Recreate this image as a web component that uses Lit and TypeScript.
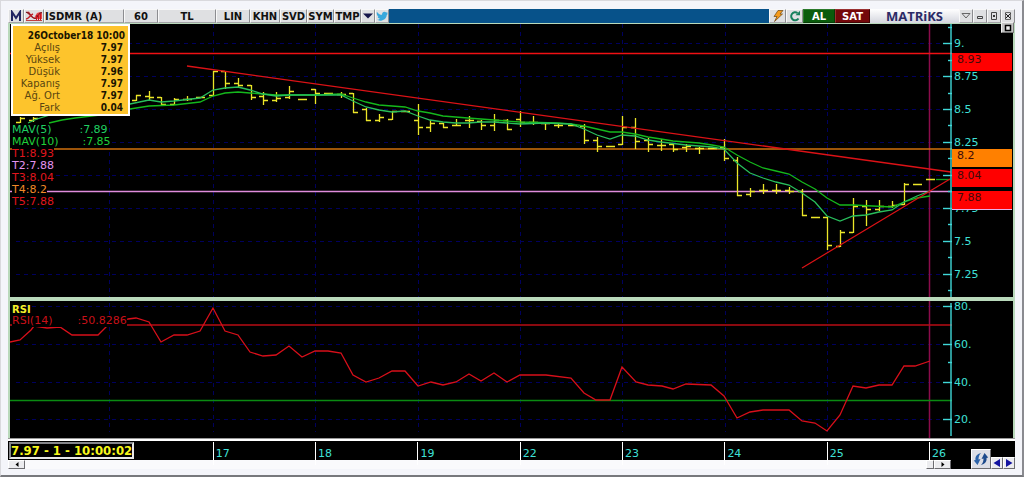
import { LitElement, html, svg, css } from "lit";
import { customElement, state } from "lit/decorators.js";

type Bar = [number, number, number, number, number];

// Chart space: x runs 10..952, price pane y 24..297, RSI pane y 301..438.
const DAY_LINES = [109.5, 213.5, 315.5, 418.5, 520.5, 622.5, 725.5, 827.5];

// [x, high, low, open, close]
const BARS: Bar[] = [
  [20, 117, 122, 122, 118], [33, 117, 121, 120, 118],
  [136, 95, 100, 100, 95], [149, 91, 99, 96, 97], [161, 97, 105, 97, 104], [174, 98, 104, 104, 99],
  [187, 96, 100, 99, 99], [200, 97, 97, 97, 97], [213, 71, 95, 95, 71], [225, 71, 88, 71, 83],
  [238, 78, 86, 83, 85], [251, 85, 99, 85, 97], [263, 92, 104, 96, 100], [276, 92, 101, 100, 98],
  [289, 86, 98, 97, 91], [302, 99, 99, 99, 99], [315, 89, 103, 89, 93], [328, 93, 94, 93, 93],
  [341, 92, 97, 94, 94], [353, 93, 112, 93, 112], [366, 108, 120, 109, 120], [379, 114, 121, 120, 117],
  [392, 111, 119, 119, 111], [405, 111, 111, 111, 111], [418, 104, 134, 120, 127], [430, 120, 131, 127, 123],
  [443, 123, 127, 123, 127], [456, 119, 125, 125, 125], [469, 116, 127, 120, 120], [481, 120, 129, 121, 125],
  [494, 114, 130, 125, 120], [507, 119, 129, 120, 129], [520, 111, 126, 119, 122], [533, 116, 124, 122, 122],
  [545, 122, 129, 123, 123], [558, 124, 127, 125, 125], [572, 125, 125, 125, 125], [584, 124, 143, 126, 140],
  [597, 137, 151, 140, 146], [610, 146, 146, 146, 146], [622, 116, 144, 144, 127], [635, 118, 148, 127, 141],
  [648, 138, 151, 140, 144], [661, 139, 150, 145, 145], [673, 144, 151, 144, 149], [686, 144, 151, 147, 146],
  [699, 147, 153, 148, 148], [712, 148, 148, 148, 148], [724, 139, 160, 147, 158], [737, 157, 195, 160, 195],
  [750, 188, 196, 194, 191], [763, 184, 193, 190, 190], [776, 184, 193, 190, 190], [789, 187, 193, 190, 191],
  [802, 189, 215, 191, 215], [815, 217, 217, 217, 217], [827, 217, 249, 217, 245], [840, 230, 246, 246, 232],
  [853, 198, 232, 232, 206], [866, 200, 225, 206, 209], [879, 200, 210, 209, 206], [892, 201, 207, 206, 205],
  [904, 183, 204, 204, 184], [917, 184, 184, 184, 184], [930, 179, 179, 179, 179],
];

const MAV5 =
  "28,123 37,119 50,115 80,111 130,104 149,100 161,102 174,101 200,98 213,90 225,88 238,87 250,90 263,94 276,96 289,95 341,95 353,101 366,107 379,110 392,112 405,111 418,116 430,120 443,122 456,123 468,123 481,122 494,122 520,124 545,123 571,124 584,129 597,135 610,139 622,135 635,136 648,140 661,142 686,145 712,147 724,149 737,163 750,173 763,178 776,182 789,185 802,193 815,202 827,216 840,221 853,216 866,215 879,212 892,210 904,202 917,196 930,191";
const MAV10 =
  "49,123 62,120 75,118 100,115 130,109 149,106 174,105 200,102 213,96 225,93 238,92 250,93 263,94 276,95 315,95 341,94 353,98 366,102 379,105 405,107 418,111 430,113 443,116 468,118 494,120 520,122 558,123 571,124 584,126 597,129 610,132 622,132 635,134 648,137 661,139 673,141 699,143 712,145 724,147 737,155 750,162 763,168 776,171 789,174 802,182 815,189 827,198 840,205 853,205 892,207 904,202 917,198 930,196";
const RSI =
  "10,342 20,340 31,330 34,326 47,328 60,327 72,335 98,335 108,325 118,320 128,319 136,318 149,322 161,342 174,335 187,335 200,331 213,308 225,331 238,335 250,352 263,356 276,355 289,346 302,357 315,351 328,351 341,353 353,375 366,382 379,378 392,371 405,371 418,386 431,382 443,385 456,382 469,374 481,381 494,373 507,382 520,375 546,375 571,378 584,393 596,400 610,400 622,367 636,382 648,385 662,386 673,389 686,384 711,385 724,396 737,418 750,412 763,410 789,410 802,421 815,423 827,431 840,415 853,386 866,388 879,385 892,385 904,366 915,366 930,361";

const PRICE_TICKS: [string, number][] = [
  ["9.", 43], ["8.75", 76], ["8.5", 109], ["8.25", 142], ["", 175], ["7.75", 208], ["7.5", 241], ["7.25", 274],
];
const RSI_TICKS: [string, number][] = [["80.", 306], ["60.", 344], ["40.", 382], ["20.", 419]];
const TAGS = [
  { text: "8.93", y: 53, fill: "#ff0000" },
  { text: "8.2", y: 149, fill: "#ff8000" },
  { text: "8.04", y: 169, fill: "#ff0000" },
  { text: "7.88", y: 191, fill: "#ff0000" },
];
const DAYS = ["17", "18", "19", "22", "23", "24", "25"];
const LEVELS = [
  { text: "T1:8.93", cls: "red" },
  { text: "T2:7.88", cls: "orchid" },
  { text: "T3:8.04", cls: "red" },
  { text: "T4:8.2", cls: "orange" },
  { text: "T5:7.88", cls: "red" },
];
const QUOTE: [string, string][] = [
  ["Açılış", "7.97"], ["Yüksek", "7.97"], ["Düşük", "7.96"],
  ["Kapanış", "7.97"], ["Ağ. Ort", "7.97"], ["Fark", "0.04"],
];

const barPath = BARS.map(([x, hi, lo, o, c]) =>
  `M${x + 0.5} ${hi}V${lo + 1}M${x - 4} ${o + 0.5}H${x}M${x} ${c + 0.5}H${x + 5}`).join("");

@customElement("app-root")
export class AppRoot extends LitElement {
  @state() private scale = "LIN";

  static styles = css`
    :host { display: block; font-family: "DejaVu Sans", Verdana, sans-serif; font-size: 11px; }
    * { box-sizing: border-box; }
    button { font: inherit; color: inherit; margin: 0; padding: 0; border: 0; border-radius: 0; }
    svg { display: block; }
    .window {
      background: #f4f5fa;
      padding: 8px 7px 6px 7px;
      border: solid #d9d9dd; border-width: 1px 2px 2px 1px;
      border-right-color: #8a8b90; border-bottom-color: #77787c;
    }
    .toolbar { display: flex; height: 14px; background: #07528a; font: bold 10px "DejaVu Sans", Verdana, sans-serif; color: #111; }
    .toolbar button {
      display: flex; align-items: center; justify-content: center; overflow: hidden; white-space: nowrap;
      background: #dfe0e2; border: 1px solid; border-color: #f8f8f8 #8c8d90 #a4a5a8 #f8f8f8;
    }
    .toolbar .w14 { width: 14px; }
    .toolbar .w16 { width: 16px; }
    .toolbar .w17 { width: 17px; }
    .toolbar .w20 { width: 20px; }
    .toolbar .w27 { width: 27px; }
    .toolbar .w30 { width: 30px; }
    .toolbar .w34 { width: 34px; }
    .toolbar .w58 { width: 58px; }
    .toolbar .symbol { width: 80px; justify-content: flex-start; }
    .toolbar .buy { width: 32px; background: #0a5c0c; color: #fff; border-color: #2b7a2b #063c06 #063c06 #2b7a2b; }
    .toolbar .sell { width: 35px; background: #74080a; color: #fff; border-color: #9a3030 #400404 #400404 #9a3030; }
    .spacer { flex: 1; }
    .brand {
      width: 89px; display: flex; align-items: center; justify-content: center;
      background: linear-gradient(#fff, #d4d6de); color: #2b2b66;
      font: bold 13px/14px "Open Sans", sans-serif;
    }
    .panes { background: #b9d9bb; padding: 1px 2px 0 2px; position: relative; }
    .pane { display: grid; grid-template-columns: minmax(0, 1fr) 61px; background: #000; position: relative; margin-bottom: 4px; }
    .pane.last { margin-bottom: 0; }
    .plot { width: 100%; height: 100%; }
    .plot * { vector-effect: non-scaling-stroke; }
    .price { height: 273px; }
    .rsi { height: 137px; }
    .none { fill: none; }
    .grid { stroke: #00005e; stroke-dasharray: 4 4; }
    .aqua { stroke: #3fd8d8; stroke-width: 1.4; }
    .label { fill: #3fe0d8; font-size: 11px; }
    .tag { fill: #3d0b0b; font-size: 11px; }
    .maximise {
      position: absolute; right: 1px; top: -1px; width: 13px; height: 11px; z-index: 1;
      background: #c4c4c4; border: 1px solid; border-color: #eee #777 #777 #eee;
      display: flex; align-items: center; justify-content: center;
    }
    .quote {
      position: absolute; left: 1px; top: 0; width: 119px; height: 92px; background: #fdc42c;
      border: 2px solid #fff; padding: 4px 3px 0 0; font-size: 10px; line-height: 12px;
    }
    .quote h2 { margin: 0; text-align: right; font: bold 10px/12px "DejaVu Sans Condensed", "DejaVu Sans", sans-serif; color: #1a1400; }
    .quote dl { margin: 0; display: grid; grid-template-columns: 47px 1fr; padding-right: 2px; }
    .quote dt { text-align: right; color: #5a4610; }
    .quote dd { margin: 0; text-align: right; font-family: "DejaVu Sans Condensed", "DejaVu Sans", sans-serif; font-weight: bold; color: #1a1400; }
    .legend { position: absolute; left: 2px; top: 100px; display: grid; justify-items: start; line-height: 12px; }
    .legend > div { background: #000; display: flex; }
    .legend .mav5 { color: #1fcf62; gap: 28px; }
    .legend .mav10 { color: #1fcf3a; gap: 24px; }
    .red { color: #e0161e; }
    .orchid { color: #e293ef; }
    .orange { color: #f08a28; }
    .rsi-legend { position: absolute; left: 2px; top: 3px; line-height: 12px; color: #c81018; }
    .rsi-legend h2 { margin: 0; font: bold 10px/11px "DejaVu Sans", sans-serif; color: #f6f02a; }
    .rsi-legend div { display: flex; gap: 25px; background: #000; }
    .rule { height: 3px; background: #fff; border-top: 1px solid #999; }
    .footer { display: grid; grid-template-columns: minmax(0, 1fr) 64px; }
    .timeline { display: grid; grid-template-columns: 205fr 717fr 22fr; height: 19px; background: #000; padding-top: 1px; color: #3fe0d8; font-size: 11px; line-height: 23px; }
    .days { display: grid; grid-template-columns: repeat(7, 1fr); }
    .day { border-left: 1px solid #fff; padding-left: 2px; overflow: visible; white-space: nowrap; }
    .status {
      justify-self: start; align-self: start; margin-left: 1px; height: 17px; white-space: nowrap; color: #f8f81c;
      border: 2px solid; border-color: #85868a #e8e8e8 #e8e8e8 #85868a;
      font: bold 13px/13px "DejaVu Sans Condensed", "DejaVu Sans", sans-serif;
    }
    .scroll { display: flex; height: 9px; background: #fafafc; }
    .scroll button, .corner button {
      display: flex; align-items: center; justify-content: center;
      background: #ececef; border: 1px solid; border-color: #fff #6c6c70 #6c6c70 #fff;
    }
    .scroll .end { width: 17px; }
    .scroll .thumb { width: 8px; }
    .corner { display: flex; align-items: flex-end; justify-content: flex-end; background: #000; }
    .corner .sync { width: 20px; height: 20px; background: #dcdee6; }
    .corner .step { width: 12px; height: 12px; }
  `;

  private pick(mode: string) {
    this.scale = mode;
  }

  private priceTag(t: { text: string; y: number; fill: string }) {
    return svg`<rect x="0" y=${t.y} width="60" height="18" fill=${t.fill}></rect>
      <text class="tag" x="5" y=${t.y + 10}>${t.text}</text>`;
  }

  private ticks(list: [string, number][]) {
    return list.map(([, y]) => svg`<path class="aqua" d=${`M943 ${y + 0.5}H952`}></path>`);
  }

  private labels(list: [string, number][]) {
    return list.map(([text, y]) => svg`<text class="label" x="2" y=${y + 4}>${text}</text>`);
  }

  private toolbar() {
    return html`
      <div class="toolbar">
        <button class="w16" aria-label="Menu">
          <svg width="14" height="12" viewBox="0 0 14 12"><path d="M3 11V2L7 8L11 2V11" fill="none" stroke="#202460" stroke-width="2"/></svg>
        </button>
        <button class="w20" aria-label="Chart">
          <svg width="18" height="12" viewBox="0 0 18 12">
            <path d="M1 2L4 1.500L7 6L9 8L12 3L15 2L17 3V9H9L6 7Z" fill="#e8484c"/>
            <path d="M1 2.500C5 1 6 8.500 10 8.500C13 8.500 12 3 17 2.500" fill="none" stroke="#7a1820" stroke-width="1.200"/>
            <path d="M1 9C4 9 5 5 8 4" fill="none" stroke="#c02028" stroke-width="1.400"/>
            <path d="M11.500 5V10M13.500 4V10M15.500 4V10" stroke="#c8141c"/>
            <path d="M1 10.500H17" stroke="#c04040"/>
          </svg>
        </button>
        <button class="symbol">ISDMR (A)</button>
        <button class="w34">60</button>
        <button class="w58">TL</button>
        <button class="w34" aria-pressed=${this.scale === "LIN"} @click=${() => this.pick("LIN")}>LIN</button>
        <button class="w30">KHN</button>
        <button class="w27">SVD</button>
        <button class="w27">SYM</button>
        <button class="w27">TMP</button>
        <button class="w14" aria-label="More">
          <svg width="10" height="6" viewBox="0 0 10 6"><path d="M0 0.500H10L5 5.500Z" fill="#15154a"/></svg>
        </button>
        <button class="w14" aria-label="Share">
          <svg width="14" height="12" viewBox="0 0 14 12"><path d="M1 1C3 4 5 4.500 7 4.500C7 1 10 0 12 2L13.500 1.500L12.800 3L14 3.200L12.500 5C12 10 6 13 1 10.500C3 10.500 4 10 4.500 9C2.500 8.500 2 7.500 2 6.800H3C1 5.500 0.500 3 1 1Z" fill="#38a8dc"/></svg>
        </button>
        <span class="spacer"></span>
        <button class="w17" aria-label="Quick trade">
          <svg width="12" height="12" viewBox="0 0 12 12"><path d="M6 0.500H11L8 4H10.500L2.500 11.500L5 6.500H2Z" fill="#f59b1c" stroke="#6b4510" stroke-width="0.700"/></svg>
        </button>
        <button class="w17" aria-label="Refresh">
          <svg width="12" height="12" viewBox="0 0 12 12"><path d="M9.500 8.500A4 4 0 1 1 8.500 3" fill="none" stroke="#16805c" stroke-width="2"/><path d="M6.500 5.200H11V0.800Z" fill="#16805c"/></svg>
        </button>
        <button class="buy">AL</button>
        <button class="sell">SAT</button>
        <span class="brand">MATRiKS</span>
        <button class="w14" aria-label="Roll up">
          <svg width="10" height="8" viewBox="0 0 10 8"><path d="M1 1.500H9L5 6Z" fill="none" stroke="#666"/></svg>
        </button>
        <button class="w14" aria-label="Minimise">
          <svg width="10" height="10" viewBox="0 0 10 10"><path d="M2.500 5.500H7.500V7.500H2.500Z" fill="none" stroke="#444"/></svg>
        </button>
        <button class="w14" aria-label="Restore">
          <svg width="10" height="10" viewBox="0 0 10 10"><path d="M2.500 1.500H7.500V8.500H2.500Z" fill="none" stroke="#444"/><path d="M4 4H6V6H4Z" fill="#333"/></svg>
        </button>
        <button class="w14" aria-label="Close">
          <svg width="10" height="10" viewBox="0 0 10 10"><path d="M2.500 1.500H7.500V8.500H2.500Z" fill="none" stroke="#666"/><path d="M2.500 2.500L7.500 7.500M7.500 2.500L2.500 7.500" stroke="#222"/></svg>
        </button>
      </div>`;
  }

  private pricePane() {
    return html`
      <section class="pane price" aria-label="Price">
        <svg class="plot" viewBox="10 24 942 273" preserveAspectRatio="none">
          ${PRICE_TICKS.map(([, y]) => svg`<path class="grid" d=${`M16 ${y + 0.5}H952`}></path>`)}
          ${DAY_LINES.map((x) => svg`<path class="grid" d=${`M${x} 24V297`}></path>`)}
          <path d="M929.500 24V297" stroke="#8c0c4c" stroke-width="1.500"/>
          <path d="M10 53.500H952" stroke="#f01014" stroke-width="1.500"/>
          <path d="M10 149H952" stroke="#d0700c" stroke-width="1.500"/>
          <path d="M10 191.500H952" stroke="#e08cdc" stroke-width="1.500"/>
          <path class="none" d=${barPath} stroke="#ece628" stroke-width="1.300"/>
          <polyline class="none" points=${MAV10} stroke="#14b81c" stroke-width="1.300"/>
          <polyline class="none" points=${MAV5} stroke="#28bf5c" stroke-width="1.300"/>
          <path d="M936 179.500H950" stroke="#14a020" stroke-width="1.300"/>
          <path d="M187 66L951 172" stroke="#dc1216" stroke-width="1.300"/>
          <path d="M802 268L950 179" stroke="#dc1216" stroke-width="1.200"/>
          ${this.ticks(PRICE_TICKS)}
          ${[27, 60, 93, 125, 158, 191, 224, 257, 290].map((y) => svg`<path class="aqua" d=${`M948 ${y + 0.5}H952`}></path>`)}
          <path class="aqua" d="M951 24V297"/>
        </svg>
        <svg width="61" height="273" viewBox="0 24 61 273">
          ${this.labels(PRICE_TICKS)}
          ${TAGS.map((t) => this.priceTag(t))}
          <path d="M0 209.500H60" stroke="#e8b0e8"/>
        </svg>
        <div class="legend">
          <div class="mav5"><span>MAV(5)</span><span>:7.89</span></div>
          <div class="mav10"><span>MAV(10)</span><span>:7.85</span></div>
          ${LEVELS.map((l) => html`<div class=${l.cls}>${l.text}</div>`)}
        </div>
        <aside class="quote">
          <h2>26October18 10:00</h2>
          <dl>${QUOTE.map(([k, v]) => html`<dt>${k}</dt><dd>${v}</dd>`)}</dl>
        </aside>
      </section>`;
  }

  private rsiPane() {
    return html`
      <section class="pane rsi last" aria-label="RSI">
        <svg class="plot" viewBox="10 301 942 137" preserveAspectRatio="none">
          ${RSI_TICKS.map(([, y]) => svg`<path class="grid" d=${`M16 ${y + 0.5}H952`}></path>`)}
          ${DAY_LINES.map((x) => svg`<path class="grid" d=${`M${x} 303V432`}></path>`)}
          <path d="M929.500 301V438" stroke="#8c0c4c" stroke-width="1.500"/>
          <path d="M10 325H952" stroke="#b80c14" stroke-width="1.400"/>
          <path d="M10 400.500H952" stroke="#0a8a12" stroke-width="1.300"/>
          <polyline class="none" points=${RSI} stroke="#d80f1a" stroke-width="1.300"/>
          ${this.ticks(RSI_TICKS)}
          <path class="aqua" d="M948 362.500H952"/>
          <path class="aqua" d="M951 303V436"/>
        </svg>
        <svg width="61" height="137" viewBox="0 301 61 137">${this.labels(RSI_TICKS)}</svg>
        <div class="rsi-legend">
          <h2>RSI</h2>
          <div><span>RSI(14)</span><span>:50.8286</span></div>
        </div>
      </section>`;
  }

  private footer() {
    return html`
      <div class="footer">
        <div>
          <div class="timeline">
            <output class="status">7.97 - 1 - 10:00:02</output>
            <div class="days">${DAYS.map((d) => html`<span class="day">${d}</span>`)}</div>
            <span class="day">26</span>
          </div>
          <div class="scroll">
            <button class="end" aria-label="Scroll left"><svg width="4" height="5" viewBox="0 0 4 5"><path d="M3.500 0V5L0.500 2.500Z"/></svg></button>
            <span class="spacer"></span>
            <button class="thumb" aria-label="Scroll position"></button>
            <button class="end" aria-label="Scroll right"><svg width="4" height="5" viewBox="0 0 4 5"><path d="M0.500 0V5L3.500 2.500Z"/></svg></button>
          </div>
        </div>
        <div class="corner">
          <button class="sync" aria-label="Synchronise">
            <svg width="16" height="16" viewBox="0 0 16 16">
              <path d="M8 2C4 3 2 5.500 2.500 9L0.800 9.500L4.500 14L7.500 8L5.500 8.500C5.500 6 6 4 8 2Z" fill="#2c62a8"/>
              <path d="M8 14C12 13 14 10.500 13.500 7L15.200 6.500L11.500 2L8.500 8L10.500 7.500C10.500 10 10 12 8 14Z" fill="#1c4a8c"/>
            </svg>
          </button>
          <button class="step" aria-label="Previous"><svg width="8" height="8" viewBox="0 0 8 8"><path d="M7 0V8L0.500 4Z" fill="#1414a0"/></svg></button>
          <button class="step" aria-label="Next"><svg width="8" height="8" viewBox="0 0 8 8"><path d="M1 0V8L7.500 4Z" fill="#1414a0"/></svg></button>
        </div>
      </div>`;
  }

  render() {
    return html`
      <main class="window">
        ${this.toolbar()}
        <div class="panes">
          <button class="maximise" aria-label="Maximise">
            <svg width="8" height="8" viewBox="0 0 8 8"><path d="M1.500 1.500H6.500V6.500H1.500Z" fill="#eee" stroke="#000" stroke-width="1.500"/></svg>
          </button>
          ${this.pricePane()} ${this.rsiPane()}
        </div>
        <div class="rule"></div>
        ${this.footer()}
      </main>`;
  }
}
